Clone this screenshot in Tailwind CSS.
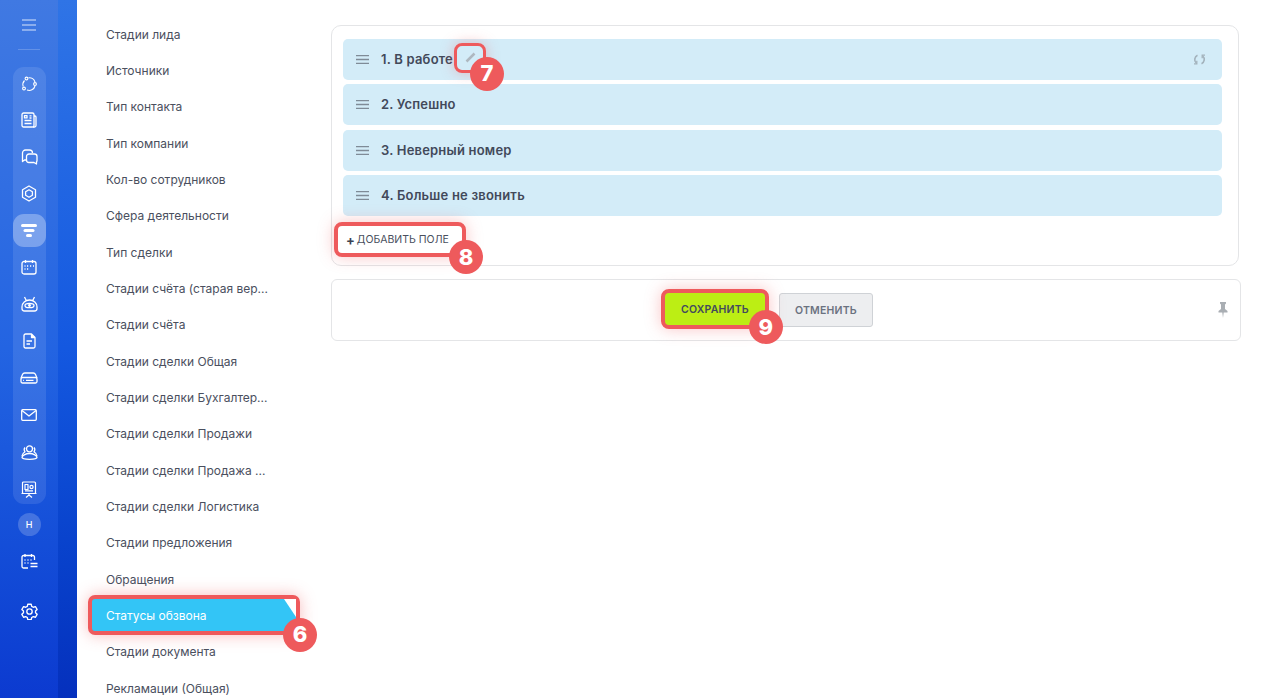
<!DOCTYPE html>
<html lang="ru">
<head>
    <meta charset="UTF-8">
    <title>Статусы обзвона</title>
    <script src="https://cdn.jsdelivr.net/npm/@tailwindcss/browser@4"></script>
</head>
<body class="bg-white [font-family:Inter,sans-serif] h-[698px] overflow-hidden flex text-[#42495a]">

    <!-- Sidebar -->
    <aside class="w-[77px] h-[698px] shrink-0 flex bg-gradient-to-b from-[#2f74e6] via-[#1458e0] to-[#0530bd]">
        <div class="w-[58px] h-full flex flex-col items-center bg-gradient-to-b from-[#4079e2] via-[#2364e2] to-[#0c3ad0] text-white">
            <div class="h-[49px] w-full flex items-center justify-center">
                <svg class="w-[14px] h-[12px] opacity-80" viewBox="0 0 14 12" fill="none" stroke="currentColor" stroke-width="1.2"><path d="M0 1h14M0 6h14M0 11h14"/></svg>
            </div>
            <div class="w-[22px] h-px bg-white/20"></div>
            <div class="mt-[17px] w-[33px] h-[437px] shrink-0 rounded-[11px] bg-white/10 flex flex-col items-center [&>div]:shrink-0">
                <div class="h-[34px] pb-[1px] w-full flex items-center justify-center">
                    <svg class="w-[16px] h-[16px]" viewBox="0 0 16 16" fill="none" stroke="currentColor" stroke-width="1.1"><path d="M7.500 1.800a6 6 0 0 1 6.500 4.400M14 10a6 6 0 0 1-8 4M2.200 10.500A6 6 0 0 1 3.500 4.500"/><circle cx="5.500" cy="2.500" r="1.400"/><circle cx="3" cy="12.500" r="1.400"/><circle cx="14" cy="8" r="1.400"/></svg>
                </div>
                <div class="h-[37px] w-full flex items-center justify-center">
                    <svg class="w-[16px] h-[16px]" viewBox="0 0 16 16" fill="none" stroke="currentColor" stroke-width="1.3" stroke-linejoin="round"><rect x="1" y="1" width="12" height="14" rx="1.6"/><path d="M13 4h1a1 1 0 0 1 1 1v8.500a1.500 1.500 0 0 1-1.500 1.500H12M3.500 8.500h7M3.500 11.500h7M8.500 3.800h2M8.500 6h2"/><rect x="3.500" y="3.600" width="2.500" height="2.300"/></svg>
                </div>
                <div class="h-[37px] w-full flex items-center justify-center">
                    <svg class="w-[17px] h-[16px]" viewBox="0 0 17 16" fill="none" stroke="currentColor" stroke-width="1.3" stroke-linejoin="round"><path d="M5 11H3.500L1.500 12.500V4a3 3 0 0 1 3-3H8.500a3 3 0 0 1 3 3"/><path d="M8 5h5.500a2.500 2.500 0 0 1 2.500 2.500v4a2.500 2.500 0 0 1-.5 1.500v2L13 13.500H8A2.500 2.500 0 0 1 5.500 11V7.500A2.500 2.500 0 0 1 8 5z"/></svg>
                </div>
                <div class="h-[37px] w-full flex items-center justify-center">
                    <svg class="w-[16px] h-[17px]" viewBox="0 0 16 17" fill="none" stroke="currentColor" stroke-width="1.3" stroke-linejoin="round"><path d="M8 1l6.500 3.700v7.600L8 16l-6.500-3.700V4.700z"/><path d="M8 4.800l3.400 1.900v3.600L8 12.200l-3.400-1.900V6.700z"/></svg>
                </div>
                <div class="h-[33px] mt-[2px] w-full flex items-center justify-center bg-white/30 rounded-[11px]">
                    <svg class="w-[16px] h-[13px]" viewBox="0 0 16 13" fill="white"><rect x="0" y="0" width="16" height="3" rx="1.500"/><rect x="2.500" y="5" width="11" height="3" rx="1.500"/><rect x="5" y="10" width="6" height="3" rx="1.500"/></svg>
                </div>
                <div class="h-[37px] mt-[1.500px] w-full flex items-center justify-center">
                    <svg class="w-[16px] h-[16px]" viewBox="0 0 16 16" fill="none" stroke="currentColor" stroke-width="1.3"><rect x="1" y="2.500" width="14" height="12.500" rx="2"/><path d="M4.500 1v3M11.500 1v3"/><path d="M6 7h1.200M9 7h1.200M12 7h1M3.500 7h1M3.500 10h1M6 10h1.200" stroke-width="1.500"/></svg>
                </div>
                <div class="h-[37px] w-full flex items-center justify-center">
                    <svg class="w-[17px] h-[16px]" viewBox="0 0 17 16" fill="none" stroke="currentColor" stroke-width="1.3"><path d="M3.500 1l1.800 3.500M13.500 1l-1.800 3.500"/><path d="M1 11a7.500 7 0 0 1 15 0v1.500a2.500 2.500 0 0 1-2.500 2.500h-10A2.500 2.500 0 0 1 1 12.500z"/><ellipse cx="8.500" cy="9.500" rx="4.500" ry="2.200"/><circle cx="8.500" cy="9.500" r=".8" fill="white"/></svg>
                </div>
                <div class="h-[37px] w-full flex items-center justify-center">
                    <svg class="w-[13px] h-[16px]" viewBox="0 0 13 16" fill="none" stroke="currentColor" stroke-width="1.3" stroke-linejoin="round"><path d="M2.500 1H8.500L12 4.500V13.500A1.500 1.500 0 0 1 10.500 15H2.500A1.500 1.500 0 0 1 1 13.500V2.500A1.500 1.500 0 0 1 2.500 1z"/><path d="M8.500 1v3.500H12" fill="white"/><path d="M3.500 8h5.500M3.500 11h3.500"/></svg>
                </div>
                <div class="h-[37px] w-full flex items-center justify-center">
                    <svg class="w-[18px] h-[12px]" viewBox="0 0 18 12" fill="none" stroke="currentColor" stroke-width="1.3" stroke-linejoin="round"><path d="M1 6l1.500-3.500A2.500 2.500 0 0 1 5 1h8a2.500 2.500 0 0 1 2.500 1.500L17 6"/><rect x="1" y="5.500" width="16" height="5.500" rx="1.500"/><path d="M6 8.300h7.500M3.200 8.300h.8"/></svg>
                </div>
                <div class="h-[37px] w-full flex items-center justify-center">
                    <svg class="w-[16px] h-[12px]" viewBox="0 0 16 12" fill="none" stroke="currentColor" stroke-width="1.3" stroke-linejoin="round"><rect x=".7" y=".7" width="14.600" height="10.600" rx="1"/><path d="M1 1.500l7 5.500 7-5.500"/></svg>
                </div>
                <div class="h-[37px] w-full flex items-center justify-center">
                    <svg class="w-[17px] h-[15px]" viewBox="0 0 17 15" fill="none" stroke="currentColor" stroke-width="1.3" stroke-linejoin="round"><circle cx="8.500" cy="3.800" r="3"/><path d="M4 2.500C2.800 4 3 5.500 4 6.800 2.400 7.800 1.200 9.300 1 11M13 2.500c1.200 1.500 1 3 0 4.300 1.600 1 2.800 2.500 3 4.200"/><path d="M1 12.300c0 1.400 3.500 2 7.500 2s7.500-.6 7.500-2-3.500-3.800-7.500-3.800S1 10.900 1 12.300z"/></svg>
                </div>
                <div class="h-[37px] w-full flex items-center justify-center">
                    <svg class="w-[16px] h-[17px]" viewBox="0 0 16 17" fill="none" stroke="currentColor" stroke-width="1.2" stroke-linejoin="round"><rect x="1.500" y="1" width="13" height="11.500" rx="1"/><rect x="4" y="3.500" width="3" height="5" /><circle cx="10.500" cy="6" r="1.600"/><path d="M.5 12.500h15M4 9.800h8M8 12.500v1.500M5 16.500l3-2.500 3 2.500"/></svg>
                </div>
            </div>
            <div class="mt-[9px] w-[23px] h-[23px] rounded-full bg-white/20 flex items-center justify-center text-[9px] font-medium">Н</div>
            <div class="mt-[13px] h-[24px] flex items-center justify-center">
                <svg class="w-[17px] h-[16px]" viewBox="0 0 17 16" fill="none" stroke="currentColor" stroke-width="1.3"><path d="M13.500 7V4a1.500 1.500 0 0 0-1.500-1.500H2.500A1.500 1.500 0 0 0 1 4v9.500A1.500 1.500 0 0 0 2.500 15H7"/><path d="M4 1v3M10.500 1v3M3.500 7h1M6.500 7h1M9.500 7h1M3.500 10h1M6.500 10h1M9.500 10.500h7M9.500 13.500h7"/></svg>
            </div>
            <div class="mt-[26px] h-[24px] flex items-center justify-center">
                <svg class="w-[17px] h-[17px]" viewBox="0 0 24 24" fill="none" stroke="currentColor" stroke-width="1.900" stroke-linejoin="round"><path d="M9.600 1.700h4.800l.7 3 2.300 1.300 3-.9 2.400 4.100-2.300 2.100v2.600l2.300 2.100-2.400 4.100-3-.9-2.300 1.300-.7 3H9.600l-.7-3-2.300-1.300-3 .9-2.400-4.100 2.300-2.100v-2.600L1.200 9.200l2.400-4.100 3 .9 2.300-1.300z"/><circle cx="12" cy="12" r="3.800"/></svg>
            </div>
        </div>
    </aside>

    <!-- Reference list -->
    <nav class="w-[254px] shrink-0 pt-[16.500px] pl-[15px] pr-[35px] text-[12px] text-[#4a4f5e]">
        <a class="flex h-[36.330px] items-center pl-[14px]">Стадии лида</a>
        <a class="flex h-[36.330px] items-center pl-[14px]">Источники</a>
        <a class="flex h-[36.330px] items-center pl-[14px]">Тип контакта</a>
        <a class="flex h-[36.330px] items-center pl-[14px]">Тип компании</a>
        <a class="flex h-[36.330px] items-center pl-[14px]">Кол-во сотрудников</a>
        <a class="flex h-[36.330px] items-center pl-[14px]">Сфера деятельности</a>
        <a class="flex h-[36.330px] items-center pl-[14px]">Тип сделки</a>
        <a class="flex h-[36.330px] items-center pl-[14px]">Стадии счёта (старая вер...</a>
        <a class="flex h-[36.330px] items-center pl-[14px]">Стадии счёта</a>
        <a class="flex h-[36.330px] items-center pl-[14px]">Стадии сделки Общая</a>
        <a class="flex h-[36.330px] items-center pl-[14px]">Стадии сделки Бухгалтер...</a>
        <a class="flex h-[36.330px] items-center pl-[14px]">Стадии сделки Продажи</a>
        <a class="flex h-[36.330px] items-center pl-[14px]">Стадии сделки Продажа ...</a>
        <a class="flex h-[36.330px] items-center pl-[14px]">Стадии сделки Логистика</a>
        <a class="flex h-[36.330px] items-center pl-[14px]">Стадии предложения</a>
        <a class="flex h-[36.330px] items-center pl-[14px]">Обращения</a>
        <a class="relative flex h-[36.330px] items-center pl-[14px] text-white">
            <span class="absolute -z-10 left-[-4px] top-[-3px] w-[212px] h-[40px] rounded-[7px] bg-[#33c5f6] border-[4px] border-[#ee5a5c] shadow-[0_0_16px_rgba(238,90,92,0.4)]"></span>
            <span class="absolute left-[192px] top-[1px] w-0 h-0 border-t-[18px] border-t-white border-l-[12px] border-l-transparent"></span>
            Статусы обзвона
            <span class="absolute left-[191px] top-[20px] w-[34px] h-[34px] rounded-full bg-[#ee5a5c] text-white flex items-center justify-center text-[22px] font-extrabold">6</span>
        </a>
        <a class="flex h-[36.330px] items-center pl-[14px]">Стадии документа</a>
        <a class="flex h-[36.330px] items-center pl-[14px]">Рекламации (Общая)</a>
    </nav>

    <!-- Content -->
    <main class="w-[910px] shrink-0 pt-[25px]">
        <section class="w-[908px] h-[240.500px] rounded-[10px] border border-[#e4e5e7] px-[11px] pt-[12.500px]">
            <div class="w-[879px] flex flex-col gap-[4.500px]">
                <div class="relative h-[41px] pt-[0.500px] rounded-[5px] bg-[#d3ecf8] flex items-center text-[13px] font-semibold tracking-[0.2px] text-[#42495a]">
                    <svg class="ml-[13px] mr-[12px] w-[13px] h-[9px]" viewBox="0 0 13 9" fill="none" stroke="#7f8b97" stroke-width="1.300"><path d="M0 .7h13M0 4.500h13M0 8.300h13"/></svg>
                    <span>1. В работе</span>
                    <span class="absolute left-[111px] top-[4px] w-[32px] h-[30px] rounded-[8px] border-[3.500px] border-[#ee5a5c] flex items-center justify-center shadow-[0_0_14px_rgba(238,90,92,0.35)]">
                        <svg class="w-[11px] h-[11px]" viewBox="0 0 11 11" fill="none" stroke="#aeb8c0" stroke-width="2.500"><path d="M1.500 9.500L9.500 1.500"/></svg>
                    </span>
                    <span class="absolute left-[127px] top-[18px] w-[34px] h-[34px] rounded-full bg-[#ee5a5c] text-white flex items-center justify-center text-[22px] font-extrabold">7</span>
                    <svg class="absolute right-[16px] top-[14px] w-[13px] h-[13px]" viewBox="0 0 13 13" fill="none" stroke="#a3b2bc" stroke-width="1.600"><path d="M4.500 2.200A4.800 4.800 0 0 0 3.200 10M8.500 10.800A4.800 4.800 0 0 0 9.800 3"/><path d="M3.800 7.800v3H1M9.200 5.200v-3H12" stroke-width="1.300"/></svg>
                </div>
                <div class="h-[41px] pt-[0.500px] rounded-[5px] bg-[#d3ecf8] flex items-center text-[13px] font-semibold tracking-[0.2px]">
                    <svg class="ml-[13px] mr-[12px] w-[13px] h-[9px]" viewBox="0 0 13 9" fill="none" stroke="#7f8b97" stroke-width="1.300"><path d="M0 .7h13M0 4.500h13M0 8.300h13"/></svg>
                    <span>2. Успешно</span>
                </div>
                <div class="h-[41px] pt-[0.500px] rounded-[5px] bg-[#d3ecf8] flex items-center text-[13px] font-semibold tracking-[0.2px]">
                    <svg class="ml-[13px] mr-[12px] w-[13px] h-[9px]" viewBox="0 0 13 9" fill="none" stroke="#7f8b97" stroke-width="1.300"><path d="M0 .7h13M0 4.500h13M0 8.300h13"/></svg>
                    <span>3. Неверный номер</span>
                </div>
                <div class="h-[41px] pt-[0.500px] rounded-[5px] bg-[#d3ecf8] flex items-center text-[13px] font-semibold tracking-[0.2px]">
                    <svg class="ml-[13px] mr-[12px] w-[13px] h-[9px]" viewBox="0 0 13 9" fill="none" stroke="#7f8b97" stroke-width="1.300"><path d="M0 .7h13M0 4.500h13M0 8.300h13"/></svg>
                    <span>4. Больше не звонить</span>
                </div>
            </div>
            <div class="relative mt-[6px] -ml-[9px] w-[132px] h-[35px] pt-[1px] rounded-[8px] border-[4px] border-[#ee5a5c] bg-white flex items-center pl-[8px] text-[10.500px] text-[#4a4f5e] shadow-[0_0_16px_rgba(238,90,92,0.35)]">
                <span class="font-bold text-[13px] leading-none mr-[2px] text-[#3c4252]">+</span>ДОБАВИТЬ ПОЛЕ
                <span class="absolute left-[111px] top-[14px] w-[34px] h-[34px] rounded-full bg-[#ee5a5c] text-white flex items-center justify-center text-[22px] font-extrabold">8</span>
            </div>
        </section>
        <section class="relative mt-[13.500px] w-[910px] h-[62px] rounded-[6px] border border-[#e4e5e7] flex items-center gap-[10px] pl-[329px]">
            <div class="relative -mt-[2px] w-[108px] h-[40px] pt-[2px] rounded-[8px] border-[4px] border-[#ee5a5c] bg-[#bcee14] flex items-center justify-center text-[10.500px] font-semibold tracking-[0.2px] text-[#42495f] shadow-[0_0_16px_rgba(238,90,92,0.35)]">
                СОХРАНИТЬ
                <span class="absolute left-[84px] top-[17px] w-[34px] h-[34px] rounded-full bg-[#ee5a5c] text-white flex items-center justify-center text-[22px] font-extrabold">9</span>
            </div>
            <button class="w-[94px] h-[34px] pt-[1px] rounded-[3px] border border-[#cfd2d6] bg-[#edeef0] text-[10.500px] font-semibold tracking-[0.2px] text-[#6b7280]">ОТМЕНИТЬ</button>
            <svg class="absolute right-[12px] top-[22px] w-[10px] h-[16px]" viewBox="0 0 10 16" fill="#a9aeb3"><path d="M2 0h6v1.500L7 2.500v4.500l2.500 2v1.500H5.700L5 16l-.7-5.500H.5V9L3 7V2.500L2 1.500z"/></svg>
        </section>
    </main>

</body>
</html>
